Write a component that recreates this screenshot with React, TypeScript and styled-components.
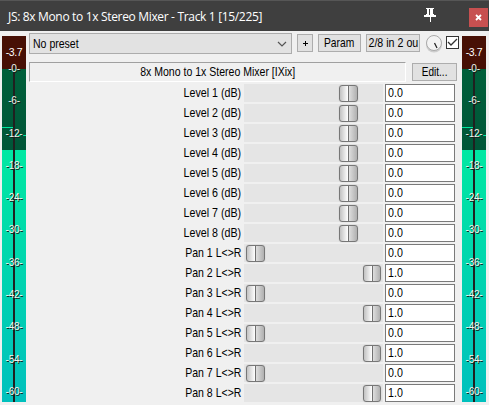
import React from 'react';
import styled, { createGlobalStyle } from 'styled-components';

const GlobalStyle = createGlobalStyle`
  * { box-sizing: border-box; }
  html, body { margin: 0; padding: 0; background: #f0f0f0; overflow: hidden; }
  body { font: 13px/16px "Liberation Sans", Arial, sans-serif; color: #000; }
`;

const Window = styled.div`
  width: 489px;
  height: 405px;
  display: flex;
  flex-direction: column;
  background: #f0f0f0;
`;

const TitleBar = styled.header`
  height: 31px;
  flex: none;
  display: flex;
  align-items: center;
  padding: 4px 1px 0 8px;
  background: #3f3f3f;
  border-top: 1px solid #565656;
  color: #fff;
`;

const TitleText = styled.span`
  flex: 1;
  font: 12px/16px "Open Sans", "Noto Sans", sans-serif;
  letter-spacing: -0.33px;
  white-space: nowrap;
  margin-top: -3px;
`;

const PinIcon = styled.svg`
  width: 12px;
  height: 14px;
  margin: -6px 33px 0 0;
`;

const CloseButton = styled.div`
  width: 19px;
  height: 19px;
  margin-top: -1px;
  display: flex;
  align-items: center;
  justify-content: center;
  background: #c75050;
`;

const Body = styled.main`
  flex: 1;
  display: flex;
  padding: 0 3px 0 2px;
`;

const Meter = styled.div`
  position: relative;
  width: 24px;
  height: 366px;
  margin-top: 5px;
  flex: none;
  background: linear-gradient(#471005 0 33px, #005f3a 33px, #005638 114px, #00e8a2 114px, #00c0bd 366px);
`;

const Stem = styled.div`
  position: absolute;
  left: 11px;
  top: 36px;
  width: 2px;
  height: 330px;
  background: #202020;
`;

const Peak = styled.div<{ $left: number; $top: number }>`
  position: absolute;
  left: ${p => p.$left}px;
  top: ${p => p.$top}px;
  width: ${p => (p.$left ? 12 : 11)}px;
  height: 1px;
  background: #00e79f;
`;

const Scale = styled.div`
  position: absolute;
  left: -4px;
  right: -4px;
  top: 27px;
  height: 335px;
  display: flex;
  flex-direction: column;
  justify-content: space-between;
  text-align: center;
  font: 10px/12px "Liberation Sans", Arial, sans-serif;
  letter-spacing: -0.2px;
  color: #f2f2ec;
  text-shadow: 1px 1px 0 #10201b;
`;

const Level = styled.div`
  position: absolute;
  top: 9px;
  left: 0;
  width: 24px;
  text-align: center;
  font: 10.5px/14px "Liberation Sans", Arial, sans-serif;
  letter-spacing: -0.4px;
  color: #fff;
`;

const Panel = styled.section`
  flex: 1;
  padding: 2px 3px 0 3px;
`;

const Toolbar = styled.div`
  display: flex;
  height: 21px;
  align-items: flex-start;
`;

const Preset = styled.div`
  width: 263px;
  height: 21px;
  display: flex;
  align-items: center;
  justify-content: space-between;
  padding: 0 4px 0 3px;
  border: 1px solid #acacac;
  background: #e2e2e2;
`;

const Text = styled.span<{ $scale: number; $origin?: string }>`
  display: inline-block;
  transform: scaleX(${p => p.$scale});
  transform-origin: ${p => p.$origin ?? 'center'};
  white-space: nowrap;
`;

const Button = styled.div<{ $width: number; $gap: number }>`
  width: ${p => p.$width}px;
  height: 18px;
  margin: 1px 0 0 ${p => p.$gap}px;
  display: flex;
  align-items: center;
  justify-content: center;
  border: 1px solid #adadad;
  background: #e1e1e1;
  flex: none;
`;

const Knob = styled.svg`
  width: 18px;
  height: 20px;
  margin: 1px 0 0 5px;
  flex: none;
`;

const Checkbox = styled.svg`
  width: 13px;
  height: 13px;
  margin: 3px 0 0 3px;
  flex: none;
`;

const Header = styled.div`
  display: flex;
  align-items: flex-start;
  height: 30px;
  padding-top: 8px;
`;

const Name = styled.div`
  width: 377px;
  height: 20px;
  display: flex;
  align-items: center;
  justify-content: center;
  border: 1px solid;
  border-color: #a0a0a0 #fff #fff #a0a0a0;
`;

const Row = styled.div`
  height: 20px;
  display: grid;
  grid-template-columns: 213px 139px 70px;
  column-gap: 2px;
  align-items: start;
`;

const RowLabel = styled.label`
  text-align: right;
  padding: 1px 1px 0 0;
  white-space: nowrap;
`;

const Track = styled.div`
  height: 18px;
  padding: 0 2px;
  display: flex;
  background: #e5e5e5;
`;

const Thumb = styled.div<{ $offset: number }>`
  width: 19px;
  height: 17px;
  margin: 1px 0 0 ${p => p.$offset}px;
  border: 1px solid #777;
  border-radius: 3px;
  box-shadow: 0 0 1px #aaa;
  background: linear-gradient(90deg, #c2c2c2, #fff 8px, #707070 8px 9px, #dedede 9px, #b0b0b0);
`;

const Value = styled.div`
  height: 18px;
  border: 1px solid #7a7a7a;
  background: #fff;
  padding-left: 2px;
`;

const marks = [0, 6, 12, 18, 24, 30, 36, 42, 48, 54, 60];

const rows = [
  ...Array.from({ length: 8 }, (_, i) => ({ label: `Level ${i + 1} (dB)`, offset: 93, value: '0.0', scale: 0.82 })),
  ...Array.from({ length: 8 }, (_, i) => ({
    label: `Pan ${i + 1} L<>R`,
    offset: i % 2 ? 117 : 0,
    value: i % 2 ? '1.0' : '0.0',
    scale: 0.81,
  })),
];

function LevelMeter() {
  return (
    <Meter>
      <Peak $left={0} $top={91} />
      <Peak $left={12} $top={99} />
      <Stem />
      <Level>-3.7</Level>
      <Scale>
        {marks.map(m => (
          <span key={m}>{m ? `-${m}-` : '-0-'}</span>
        ))}
      </Scale>
    </Meter>
  );
}

export default function App() {
  return (
    <Window>
      <GlobalStyle />
      <TitleBar>
        <TitleText>JS: 8x Mono to 1x Stereo Mixer - Track 1 [15/225]</TitleText>
        <PinIcon viewBox="0 0 12 14" shapeRendering="crispEdges" fill="#fff">
          <path d="M2 0h8v1H9v5h1v1h2v2H6.5v5h-1V9H0V7h2V6h1V1H2zM5 1v6h1V1z" fillRule="evenodd" />
        </PinIcon>
        <CloseButton>
          <svg width="7" height="7" viewBox="0 0 7 7">
            <path d="M1 1l5 5M6 1l-5 5" stroke="#fff" strokeWidth="1.8" />
          </svg>
        </CloseButton>
      </TitleBar>
      <Body>
        <LevelMeter />
        <Panel>
          <Toolbar>
            <Preset>
              <Text $scale={0.81} $origin="left">No preset</Text>
              <svg width="10" height="6" viewBox="0 0 10 6">
                <path d="M1 1l4 4 4-4" fill="none" stroke="#555" strokeWidth="1.2" />
              </svg>
            </Preset>
            <Button $width={16} $gap={5}>
              <svg width="5" height="5" viewBox="0 0 5 5" shapeRendering="crispEdges">
                <path d="M2 0h1v5H2zM0 2h5v1H0z" />
              </svg>
            </Button>
            <Button $width={43} $gap={5}><Text $scale={0.79}>Param</Text></Button>
            <Button $width={54} $gap={5}><Text $scale={0.82}>2/8 in 2 ou</Text></Button>
            <Knob viewBox="0 0 18 20">
              <circle cx="9" cy="10.5" r="8" fill="#aaa" opacity=".5" />
              <circle cx="9" cy="9" r="7.5" fill="#f3f3f3" stroke="#aaa" />
              <path d="M9.5 9l2.5 5" stroke="#222" strokeWidth="1.3" />
            </Knob>
            <Checkbox viewBox="0 0 13 13">
              <rect x=".5" y=".5" width="12" height="12" fill="#fff" stroke="#333" />
              <path d="M2 6l3 3 6-6" fill="none" stroke="#333" strokeWidth="1.3" />
            </Checkbox>
          </Toolbar>
          <Header>
            <Name><Text $scale={0.81}>8x Mono to 1x Stereo Mixer [IXix]</Text></Name>
            <Button $width={45} $gap={6}><Text $scale={0.77}>Edit...</Text></Button>
          </Header>
          {rows.map(r => (
            <Row key={r.label}>
              <RowLabel><Text $scale={r.scale} $origin="right">{r.label}</Text></RowLabel>
              <Track><Thumb $offset={r.offset} /></Track>
              <Value><Text $scale={0.82} $origin="left">{r.value}</Text></Value>
            </Row>
          ))}
        </Panel>
        <LevelMeter />
      </Body>
    </Window>
  );
}
